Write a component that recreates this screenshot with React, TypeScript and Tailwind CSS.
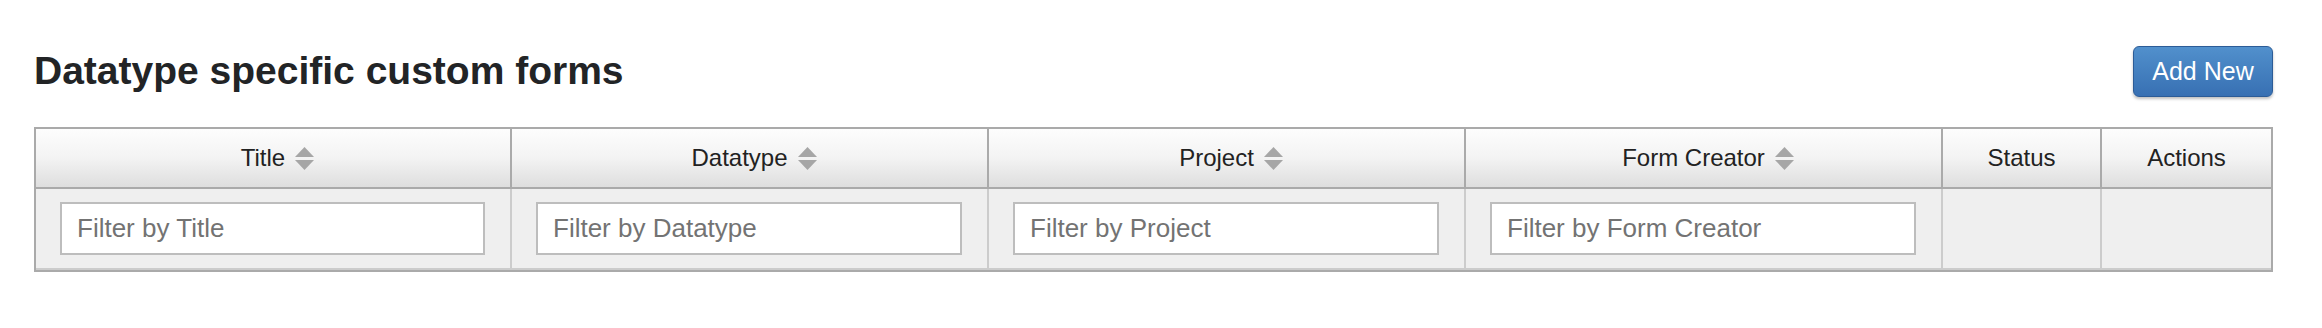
const SortIcon = () => (
  <svg width="19" height="23" viewBox="0 0 19 23" className="ml-[10px] shrink-0">
    <polygon points="9.5,0 19,10 0,10" fill="#a6a6a6" />
    <polygon points="0,13 19,13 9.5,23" fill="#a6a6a6" />
  </svg>
);

type Column = {
  label: string;
  width: string;
  sortable: boolean;
  filter?: string;
};

const columns: Column[] = [
  { label: "Title", width: "w-[474px]", sortable: true, filter: "Filter by Title" },
  { label: "Datatype", width: "w-[477px]", sortable: true, filter: "Filter by Datatype" },
  { label: "Project", width: "w-[477px]", sortable: true, filter: "Filter by Project" },
  { label: "Form Creator", width: "w-[477px]", sortable: true, filter: "Filter by Form Creator" },
  { label: "Status", width: "w-[159px]", sortable: false },
  { label: "Actions", width: "w-[171px]", sortable: false },
];

export default function App() {
  return (
    <div className="min-h-[328px] bg-white pl-[34px] pr-[49px] pt-[46px] font-['Liberation_Sans',Arial,sans-serif]">
      {/* Title bar */}
      <div className="flex h-[51px] items-center justify-between">
        <h1 className="-mt-[2px] text-[39px] font-bold leading-none text-[#222426]">
          Datatype specific custom forms
        </h1>
        <button className="h-[51px] w-[140px] rounded-[6px] border border-[#2c5c97] bg-gradient-to-b from-[#5190cc] to-[#3870b3] text-[25px] text-white shadow-[0_2px_3px_rgba(0,0,0,0.25)]">
          Add New
        </button>
      </div>

      {/* Table */}
      <div className="mt-[30px] w-[2239px] border-2 border-[#aaaaaa]">
        <div className="flex h-[60px] border-b-2 border-[#aaaaaa] bg-gradient-to-b from-[#fdfdfd] via-[#f3f3f3] to-[#dedede]">
          {columns.map((col, i) => (
            <div
              key={col.label}
              className={`${col.width} flex items-center justify-center text-[24px] text-[#222] ${col.sortable ? "pl-[9px]" : ""} ${i > 0 ? "border-l-2 border-[#aaaaaa]" : ""}`}
            >
              <span>{col.label}</span>
              {col.sortable && <SortIcon />}
            </div>
          ))}
        </div>
        <div className="flex h-[81px] border-b-2 border-[#cccccc] bg-[#efefef]">
          {columns.map((col, i) => (
            <div
              key={col.label}
              className={`${col.width} flex items-center pl-[24px] pr-[25px] ${i > 0 ? "border-l-2 border-[#cccccc]" : ""}`}
            >
              {col.filter && (
                <input
                  type="text"
                  placeholder={col.filter}
                  className="h-[53px] w-full border-2 border-[#bdbdbd] bg-white px-[15px] text-[26px] text-[#333] outline-none placeholder:text-[#737373]"
                />
              )}
            </div>
          ))}
        </div>
      </div>
    </div>
  );
}
